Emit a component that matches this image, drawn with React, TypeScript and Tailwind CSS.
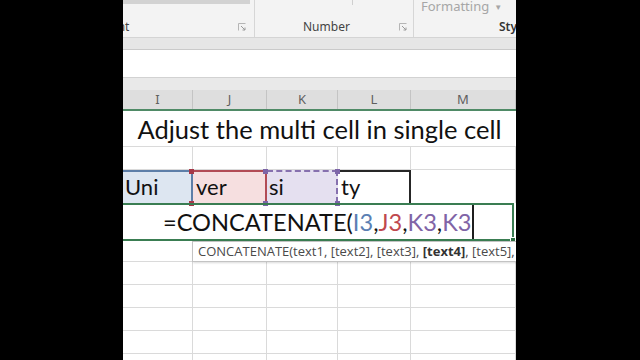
const cols = ['w-[70px]', 'w-[74px]', 'w-[71px]', 'w-[73px]', 'w-[105px]'];
const letters = ['I', 'J', 'K', 'L', 'M'];

function Launcher() {
  return (
    <svg width="8" height="8" viewBox="0 0 8 8" className="shrink-0">
      <path d="M0.5 7.5V0.5H7.5" fill="none" stroke="#b5b5b5" />
      <path d="M3 3L7 7M7 4.5V7H4.5" fill="none" stroke="#9a9a9a" />
    </svg>
  );
}

function Ribbon() {
  return (
    <div className="flex h-[37px] shrink-0 bg-[#f3f3f3] font-['Noto_Sans',sans-serif] text-[12px] text-[#444]">
      <div className="flex w-[132px] shrink-0 flex-col border-r border-[#d6d6d6]">
        <div className="h-[4px] w-[127px] bg-[#d2d2d2]" />
        <div className="mt-auto mb-[2px] flex h-[16px] items-center pr-[8px]">
          <span className="-ml-[52px] leading-none">Alignment</span>
          <div className="ml-auto">
            <Launcher />
          </div>
        </div>
      </div>
      <div className="flex w-[159px] shrink-0 flex-col border-r border-[#d6d6d6]">
        <div className="flex h-[4px]">
          <div className="ml-[97px] h-[5px] w-px bg-[#cfcfcf]" />
        </div>
        <div className="mt-auto mb-[2px] flex h-[16px] items-center pr-[6px]">
          <span className="ml-[48px] leading-none">Number</span>
          <div className="ml-auto">
            <Launcher />
          </div>
        </div>
      </div>
      <div className="flex flex-1 flex-col">
        <div className="flex items-center pl-[7px] text-[13px] leading-[13px] text-[#a6a6a6]">
          <span>Formatting</span>
          <span className="ml-[5px] text-[8px]">▼</span>
        </div>
        <div className="mt-auto mb-[2px] flex h-[16px] items-center">
          <span className="ml-[85px] font-semibold leading-none text-[#333]">Styles</span>
        </div>
      </div>
    </div>
  );
}

function GridRow({ h }: { h: string }) {
  return (
    <div className={`flex shrink-0 border-b border-[#dadada] ${h}`}>
      {cols.map((c, i) => (
        <div key={i} className={`${c} shrink-0 border-r border-[#dadada]`} />
      ))}
    </div>
  );
}

function Corner({ pos, color }: { pos: string; color: string }) {
  return <div className={`absolute h-[5px] w-[5px] ${pos} ${color}`} />;
}

export default function App() {
  return (
    <div className="flex h-[360px] w-[640px] bg-black">
      <div className="ml-[123px] flex h-full w-[393px] flex-col overflow-hidden bg-white">
        <Ribbon />
        <div className="h-[12px] shrink-0 border-t border-[#d4d4d4] bg-[#e6e6e6]" />
        <div className="h-[28px] shrink-0 border-t border-[#cacaca] bg-white" />
        <div className="h-[13px] shrink-0 border-t border-[#d2d2d2] bg-[#e9e9e9]" />

        {/* column headers */}
        <div className="flex h-[21px] shrink-0 border-b-2 border-[#4f8a66] bg-[#dedede] font-['Noto_Sans',sans-serif] text-[13px] text-[#5f5f5f]">
          {cols.map((c, i) => (
            <div key={i} className={`${c} flex shrink-0 items-center justify-center border-r border-[#c4c4c4]`}>
              {letters[i]}
            </div>
          ))}
        </div>

        <div className="flex flex-col font-['Lato',sans-serif] text-[#111]">
          {/* row 1 title */}
          <div className="flex h-[36px] shrink-0 items-center justify-center border-b border-[#dadada] pt-[2px] text-[25.5px]">
            Adjust the multi cell in single cell
          </div>

          <GridRow h="h-[23px]" />

          {/* row 3 */}
          <div className="flex h-[33px] shrink-0 text-[22px]">
            <div className="w-[70px] shrink-0 border-t-2 border-r-2 border-[#5d7ea8] bg-[#dde6f1] pl-[2px] leading-[30px]">
              Uni
            </div>
            <div className="relative w-[74px] shrink-0 border-t-2 border-r-2 border-[#b24b55] bg-[#f6dfe0] pl-[3px] leading-[30px]">
              ver
              <Corner pos="-left-[4px] -top-[3px]" color="bg-[#a63848]" />
              <Corner pos="-left-[4px] -bottom-[3px]" color="bg-[#a63848]" />
            </div>
            <div className="relative w-[71px] shrink-0 border-t-2 border-r-2 border-dashed border-[#8670ae] bg-[#e5e0f0] pl-[2px] leading-[30px]">
              si
              <Corner pos="-left-[4px] -top-[3px]" color="bg-[#7d65a8]" />
              <Corner pos="-left-[4px] -bottom-[3px]" color="bg-[#7d65a8]" />
              <Corner pos="-right-[4px] -top-[3px]" color="bg-[#7d65a8]" />
              <Corner pos="-right-[4px] -bottom-[3px]" color="bg-[#7d65a8]" />
            </div>
            <div className="w-[73px] shrink-0 border-t-2 border-r-2 border-[#262626] pl-[3px] leading-[30px]">
              ty
            </div>
            <div className="w-[105px] shrink-0 border-r border-[#dadada]" />
          </div>

          {/* row 4 formula */}
          <div className="relative -ml-[3px] flex h-[38px] w-[394px] shrink-0 border-2 border-[#3a7d52] text-[23.6px]">
            <div className="flex flex-1 items-center pl-[41px] pt-[1px]">
              <span>=CONCATENATE(</span>
              <span className="text-[#5b7fb3]">I3</span>
              <span>,</span>
              <span className="text-[#c0484e]">J3</span>
              <span>,</span>
              <span className="text-[#8064a6]">K3</span>
              <span>,</span>
              <span className="text-[#8064a6]">K3</span>
            </div>
            <div className="w-[41px] shrink-0 border-l-2 border-[#1e1e1e]" />
            <div className="absolute -right-[4px] -bottom-[4px] h-[6px] w-[6px] border border-white bg-[#2f6f45]" />
          </div>

          {/* row 5 with tooltip */}
          <div className="relative">
            <GridRow h="h-[21px]" />
            <div className="absolute left-[69px] top-0 flex h-[21px] w-[420px] items-center border border-[#c3c3c3] bg-white pl-[5px] font-['Open_Sans',sans-serif] text-[13px] whitespace-nowrap text-[#4a4a4a] shadow-[1px_1px_2px_rgba(0,0,0,0.15)]">
              CONCATENATE(text1, [text2], [text3],&nbsp;
              <b className="text-[#333]">[text4]</b>, [text5], ...)
            </div>
          </div>
          <GridRow h="h-[23px]" />
          <GridRow h="h-[23px]" />
          <GridRow h="h-[23px]" />
          <GridRow h="h-[23px]" />
          <GridRow h="h-[23px]" />
        </div>
      </div>
    </div>
  );
}
